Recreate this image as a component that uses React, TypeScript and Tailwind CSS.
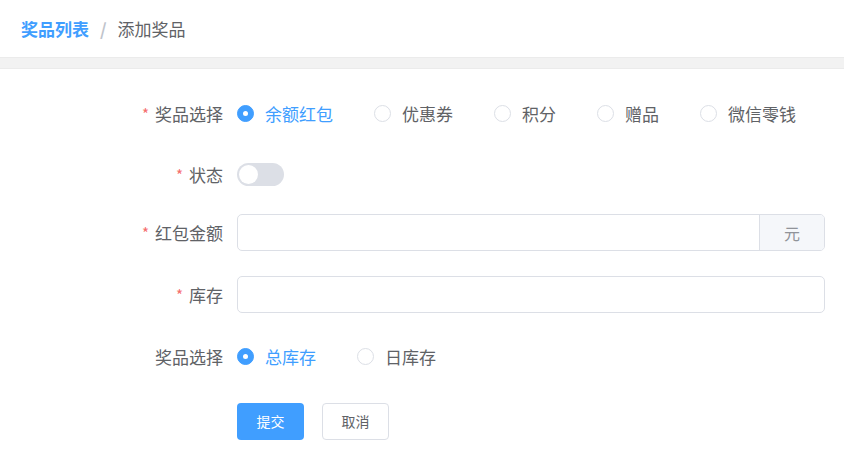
import React from "react";

const font = { fontFamily: '"Noto Sans CJK SC", "Noto Sans", sans-serif' };

type Opt = { label: string; checked?: boolean };

const Radio = ({ label, checked }: Opt) => (
  <label className="flex items-center gap-[11px] cursor-pointer">
    {checked ? (
      <span className="w-[17px] h-[17px] rounded-full bg-[#409eff] border border-[#409eff] flex items-center justify-center">
        <span className="w-[5px] h-[5px] rounded-full bg-white" />
      </span>
    ) : (
      <span className="w-[17px] h-[17px] rounded-full bg-white border border-[#dcdfe6]" />
    )}
    <span className={`text-[17px] leading-[17px] ${checked ? "text-[#409eff]" : "text-[#606266]"}`}>
      {label}
    </span>
  </label>
);

const Label = ({ text, required }: { text: string; required?: boolean }) => (
  <div className="w-[223px] shrink-0 flex justify-end items-center text-[17px] leading-[17px] text-[#606266]">
    {required && <span className="text-[#f56c6c] mr-[6px] text-[15px]">*</span>}
    {text}
  </div>
);

const App: React.FC = () => {
  const prizeTypes: Opt[] = [
    { label: "余额红包", checked: true },
    { label: "优惠券" },
    { label: "积分" },
    { label: "赠品" },
    { label: "微信零钱" },
  ];

  const stockTypes: Opt[] = [{ label: "总库存", checked: true }, { label: "日库存" }];

  return (
    <div className="w-[844px] h-[455px] bg-white overflow-hidden" style={font}>
      {/* 面包屑 */}
      <div className="h-[57px] flex items-center pl-[21px] text-[17px] leading-[17px]">
        <span className="font-bold text-[#409eff]">奖品列表</span>
        <span className="ml-[11px] mr-[11px] font-bold text-[#c0c4cc]">/</span>
        <span className="text-[#606266]">添加奖品</span>
      </div>
      <div className="h-[12px] bg-[#f2f2f2] border-y border-[#ebebeb]" />

      {/* 表单 */}
      <div className="flex flex-col pt-[25px] pr-[19px]">
        <div className="flex items-center h-[38px]">
          <Label text="奖品选择" required />
          <div className="ml-[14px] flex items-center gap-[41px]">
            {prizeTypes.map((o) => (
              <Radio key={o.label} {...o} />
            ))}
          </div>
        </div>

        <div className="flex items-center h-[38px] mt-[23px]">
          <Label text="状态" required />
          <div className="ml-[14px] w-[47px] h-[23px] rounded-full bg-[#dcdfe6] flex items-center px-[2px]">
            <span className="w-[19px] h-[19px] rounded-full bg-white" />
          </div>
        </div>

        <div className="flex items-center h-[37px] mt-[21px]">
          <Label text="红包金额" required />
          <div className="ml-[14px] flex-1 flex h-full border border-[#dcdfe6] rounded-[5px] overflow-hidden">
            <input className="flex-1 outline-none px-[14px]" />
            <div className="w-[65px] bg-[#f5f7fa] border-l border-[#dcdfe6] flex items-center justify-center text-[16px] text-[#909399]">
              元
            </div>
          </div>
        </div>

        <div className="flex items-center h-[37px] mt-[25px]">
          <Label text="库存" required />
          <input className="ml-[14px] flex-1 h-full border border-[#dcdfe6] rounded-[5px] outline-none px-[14px]" />
        </div>

        <div className="flex items-center h-[38px] mt-[24px]">
          <Label text="奖品选择" />
          <div className="ml-[14px] flex items-center gap-[41px]">
            {stockTypes.map((o) => (
              <Radio key={o.label} {...o} />
            ))}
          </div>
        </div>

        <div className="flex items-center mt-[28px] pl-[237px] gap-[18px]">
          <button className="w-[67px] h-[37px] rounded-[4px] bg-[#409eff] text-white text-[14px]">提交</button>
          <button className="w-[67px] h-[37px] rounded-[4px] bg-white border border-[#dcdfe6] text-[#606266] text-[14px]">
            取消
          </button>
        </div>
      </div>
    </div>
  );
};

export default App;
